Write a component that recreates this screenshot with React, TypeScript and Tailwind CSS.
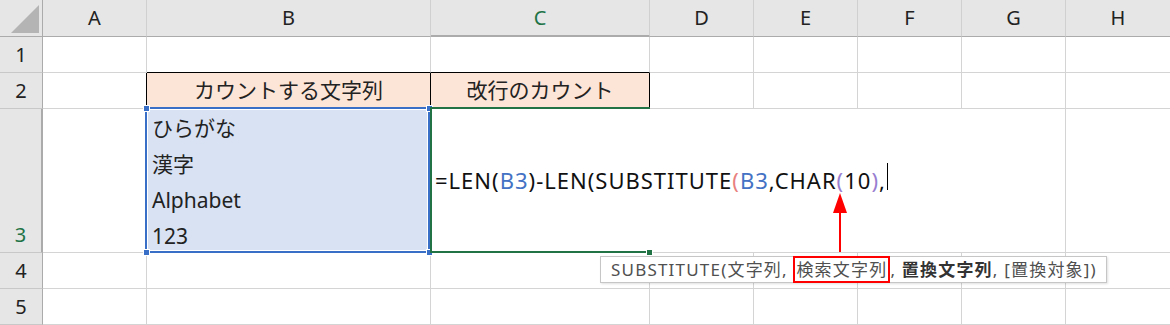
const font = "font-['Noto_Sans','Noto_Sans_CJK_JP',sans-serif]";

const Head = ({ children, className = '' }: { children?: React.ReactNode; className?: string }) => (
  <div
    className={`flex items-center justify-center border-r border-b border-r-[#d0d0d0] border-b-[#ababab] bg-[#e6e6e6] text-[20px] text-[#222] ${className}`}
  >
    {children}
  </div>
);

const RowHead = ({ children, className = '' }: { children?: React.ReactNode; className?: string }) => (
  <div
    className={`flex items-center justify-center border-r border-b border-r-[#ababab] border-b-[#c8c8c8] bg-[#e6e6e6] text-[20px] text-[#222] ${className}`}
  >
    {children}
  </div>
);

const Cell = ({ children, className = '' }: { children?: React.ReactNode; className?: string }) => (
  <div className={`border-r border-b border-[#d4d4d4] ${className}`}>{children}</div>
);

const Handle = ({ className = '' }: { className?: string }) => (
  <div className={`absolute h-[7px] w-[7px] border border-white bg-[#3a6fc8] ${className}`} />
);

export default function App() {
  return (
    <div className={`relative h-[325px] w-[1170px] overflow-hidden bg-white ${font}`}>
      <div className="grid grid-cols-[43px_104px_284px_219px_104px_104px_104px_104px_104px] grid-rows-[37px_36px_36px_144px_36px_36px]">
        {/* header row */}
        <div className="relative border-r border-b border-r-[#ababab] border-b-[#ababab] bg-[#e6e6e6]">
          <svg className="absolute left-[11px] top-[5px]" width="29" height="29" viewBox="0 0 29 29">
            <polygon points="28,0 28,28 0,28" fill="#b4b4b4" />
          </svg>
        </div>
        <Head>A</Head>
        <Head>B</Head>
        <Head className="border-b-2 border-b-[#217346] bg-[#d2d2d2] text-[#217346]">C</Head>
        <Head>D</Head>
        <Head>E</Head>
        <Head>F</Head>
        <Head>G</Head>
        <Head className="border-r-0">H</Head>

        {/* row 1 */}
        <RowHead>1</RowHead>
        <Cell />
        <Cell className="border-b-black" />
        <Cell className="border-b-black" />
        <Cell />
        <Cell />
        <Cell />
        <Cell />
        <Cell className="border-r-0" />

        {/* row 2 */}
        <RowHead>2</RowHead>
        <Cell className="border-r-black" />
        <Cell className="flex items-center justify-center border-black bg-[#fce4d6] text-[21px] text-[#222]">
          カウントする文字列
        </Cell>
        <Cell className="flex items-center justify-center border-black bg-[#fce4d6] text-[21px] text-[#222]">
          改行のカウント
        </Cell>
        <Cell />
        <Cell />
        <Cell />
        <Cell />
        <Cell className="border-r-0" />

        {/* row 3 */}
        <RowHead className="items-end border-r-2 border-r-[#217346] bg-[#d2d2d2] pb-[2px] text-[#217346]">3</RowHead>
        <Cell />
        <Cell className="bg-[#d8e2f3] pl-[5px] pt-[1px] text-[21px] leading-[36px] text-[#222]">
          <div>ひらがな</div>
          <div>漢字</div>
          <div>Alphabet</div>
          <div>123</div>
        </Cell>
        <Cell className="flex items-center overflow-visible whitespace-nowrap border-r-0 pl-[4px] text-[22px] tracking-[1px] text-[#111]">
          <span className="shrink-0">
            =LEN(<span className="text-[#4472c4]">B3</span>)-LEN(SUBSTITUTE
            <span className="text-[#e8817f]">(</span>
            <span className="text-[#4472c4]">B3</span>,CHAR<span className="text-[#9a7fd1]">(</span>10
            <span className="text-[#9a7fd1]">)</span>,
          </span>
          <span className="ml-[1px] h-[27px] w-px shrink-0 -translate-y-[4px] bg-black" />
        </Cell>
        <Cell className="border-r-0" />
        <Cell className="border-r-0" />
        <Cell className="border-r-0" />
        <Cell />
        <Cell className="border-r-0" />

        {/* row 4 */}
        <RowHead>4</RowHead>
        <Cell />
        <Cell />
        <Cell />
        <Cell />
        <Cell />
        <Cell />
        <Cell />
        <Cell className="border-r-0" />

        {/* row 5 */}
        <RowHead>5</RowHead>
        <Cell />
        <Cell />
        <Cell />
        <Cell />
        <Cell />
        <Cell />
        <Cell />
        <Cell className="border-r-0" />
      </div>

      {/* B3 range finder */}
      <div className="absolute left-[145px] top-[107px] h-[146px] w-[285px] border-2 border-[#3a6fc8]">
        <div className="h-full w-full border border-white" />
      </div>
      <Handle className="left-[143px] top-[105px]" />
      <Handle className="left-[426px] top-[105px]" />
      <Handle className="left-[143px] top-[249px]" />
      <Handle className="left-[426px] top-[249px]" />

      {/* active cell C3 */}
      <div className="absolute left-[430px] top-[107px] h-[146px] w-[220px] border-y-2 border-l-2 border-[#217346]" />
      <div className="absolute left-[646px] top-[249px] h-[7px] w-[7px] border border-white bg-[#217346]" />

      {/* red arrow */}
      <svg className="absolute left-[833px] top-[193px]" width="14" height="59" viewBox="0 0 14 59">
        <polygon points="7,0 0,20 14,20" fill="#ff0000" />
        <rect x="6" y="18" width="2" height="41" fill="#ff0000" />
      </svg>

      {/* function tooltip */}
      <div className="absolute left-[600px] top-[256px] flex h-[27px] w-[507px] items-stretch whitespace-nowrap border border-[#c6c6c6] bg-white pl-[10px] text-[17px] leading-[23px] tracking-[1.2px] text-[#505050] shadow-[1px_1px_2px_rgba(0,0,0,0.12)]">
        <span className="self-center">SUBSTITUTE(文字列,&nbsp;</span>
        <span className="-my-px flex items-center border-2 border-[#ff0000] px-[1px]">検索文字列</span>
        <span className="self-center">
          , <b className="font-bold text-[#333]">置換文字列</b>, [置換対象])
        </span>
      </div>
    </div>
  );
}
